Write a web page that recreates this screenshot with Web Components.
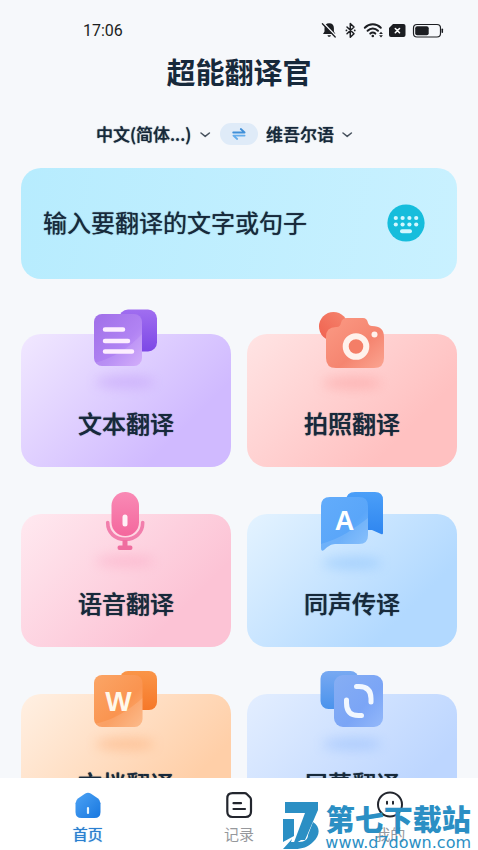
<!DOCTYPE html>
<html lang="zh-CN">
<head>
<meta charset="utf-8">
<meta name="viewport" content="width=device-width, initial-scale=1">
<title>超能翻译官</title>
<style>
  body {
    margin: 0;
    background: #f6f8fb;
    color: #17293b;
    font-family: "Noto Sans CJK SC", "Noto Sans", sans-serif;
  }
</style>
</head>
<body>
<translator-app></translator-app>

<script>
(function () {
  /** Register an element whose shadow root is a clone of the given markup. */
  function define(name, html, setup) {
    const template = document.createElement('template');
    template.innerHTML = html;
    customElements.define(name, class extends HTMLElement {
      constructor() {
        super();
        this.attachShadow({ mode: 'open' });
        this.shadowRoot.appendChild(template.content.cloneNode(true));
      }
      connectedCallback() {
        if (setup) setup(this, this.shadowRoot);
      }
    });
  }

  // Phone status bar: clock on the left, system icons on the right
  define('status-bar', `
    <style>
      :host {
        display: flex;
        align-items: center;
        justify-content: space-between;
        height: 38px;
        padding: 12px 34px 0 83px;
        font: 16px/20px Roboto, sans-serif;
        color: #1c1e22;
      }
      svg { display: block; }
    </style>
    <slot></slot>
    <svg width="124" height="18" viewBox="0 0 124 18" fill="none" stroke="#1c1e22" stroke-linecap="round" stroke-linejoin="round">
      <path d="M9.200 1.200c-3 0-4.700 2-4.700 4.700v3.600L3 12h12.400l-1.500-2.500V5.900c0-2.700-1.700-4.700-4.700-4.700zM7.500 13.200h3.400c-.3 2-3.100 2-3.400 0z" fill="#1c1e22" stroke="none"/>
      <path d="M3.600 1.400l12.600 13" stroke="#f6f8fb" stroke-width="1.600"/>
      <path d="M2.400 1.800l12.800 13.200" stroke-width="1.300"/>
      <path d="M27 5l7 6.800-3.700 3.500V1.500L34 5l-7 6.800" stroke-width="1.500"/>
      <path d="M26.400 8.400h.1M34.700 8.400h.1" stroke-width="1.700"/>
      <path d="M44.800 5.700c4.600-4.600 11.400-4.600 16 0M47.600 8.800c3-3 7.400-3 10.400 0M50.300 11.600c1.500-1.400 3.500-1.400 5 0" stroke-width="2"/>
      <circle cx="52.800" cy="14" r="1.300" fill="#1c1e22" stroke="none"/>
      <path d="M61 9.800l1.900 2.300h-3.800zM61 15.500l1.900-2.300h-3.800z" fill="#1c1e22" stroke="none"/>
      <path d="M73 2h10.500q2 0 2 2v9q0 2-2 2h-12.500q-2 0-2-2V6z" fill="#1c1e22" stroke="none"/>
      <path d="M75.300 6.500l4.200 4.200M79.500 6.500l-4.200 4.200" stroke="#fff" stroke-width="1.600"/>
      <rect x="93.500" y="2.500" width="27" height="12.500" rx="3.500" stroke-width="1.200"/>
      <rect x="95.200" y="4.200" width="13.500" height="9.100" rx="2" fill="#1c1e22" stroke="none"/>
      <path d="M122.300 7.200v3" stroke-width="1.500"/>
    </svg>
  `);

  // Drop-down for one side of the translation pair
  define('language-select', `
    <style>
      :host { display: inline-grid; align-items: center; }
      select, svg { grid-area: 1 / 1; }
      select {
        appearance: none;
        margin: 0;
        padding: 0 20px 0 0;
        border: 0;
        background: none;
        font: inherit;
        font-size: 17px;
        font-weight: 500;
        line-height: 24px;
        color: inherit;
        text-shadow: 0 0 1px currentColor;
      }
      svg { justify-self: end; pointer-events: none; }
    </style>
    <select><option></option></select>
    <svg width="12" height="12" viewBox="0 0 12 12" fill="none" stroke="#49535f" stroke-width="1.500" stroke-linecap="round" stroke-linejoin="round"><path d="M1 5l4.200 3.400L9.400 5"/></svg>
  `, (host, root) => {
    root.querySelector('option').textContent = host.getAttribute('value');
    root.querySelector('select').setAttribute('aria-label', host.getAttribute('label'));
  });

  define('language-bar', `
    <style>
      :host {
        display: grid;
        grid-template-columns: 1fr auto 1fr;
        align-items: center;
        gap: 8px;
      }
      ::slotted([slot="from"]) { justify-self: end; }
      ::slotted([slot="to"]) { justify-self: start; }
      button {
        display: grid;
        place-items: center;
        width: 38px;
        height: 22px;
        padding: 0;
        border: 0;
        border-radius: 11px;
        background: #dfebf8;
      }
    </style>
    <slot name="from"></slot>
    <button type="button" aria-label="交换语言">
      <svg width="14" height="14" viewBox="0 0 14 14" fill="none" stroke-width="1.800" stroke-linecap="round" stroke-linejoin="round">
        <path d="M1.200 5.500h11.400L8.800 2" stroke="#3f8fd8"/>
        <path d="M12.600 8.600H1.400l3.800 3.400" stroke="#64adec"/>
      </svg>
    </button>
    <slot name="to"></slot>
  `);

  define('phrase-box', `
    <style>
      :host {
        display: flex;
        align-items: center;
        gap: 16px;
        padding: 36px 32px 37px 22px;
        border-radius: 20px;
        background: linear-gradient(100deg, #b7ecfe, #c9f1ff);
      }
      input {
        flex: 1;
        box-sizing: border-box;
        min-width: 0;
        height: 38px;
        padding: 0 0 4px;
        border: 0;
        outline: 0;
        background: none;
        font: inherit;
        font-size: 24px;
        color: inherit;
      }
      input::placeholder { color: #17293b; opacity: 1; text-shadow: 0 0 1px currentColor; }
      button { padding: 0; border: 0; border-radius: 50%; background: none; }
      svg { display: block; }
    </style>
    <input type="text" aria-label="翻译内容" placeholder="输入要翻译的文字或句子">
    <button type="button" aria-label="键盘">
      <svg width="38" height="38" viewBox="0 0 38 38">
        <circle cx="19" cy="19" r="18.600" fill="#16bddc"/>
        <g fill="#d3f7ff">
          <circle cx="8.800" cy="14" r="2.100"/><circle cx="15.600" cy="14" r="2.100"/><circle cx="22.400" cy="14" r="2.100"/><circle cx="29.200" cy="14" r="2.100"/>
          <circle cx="8.800" cy="20.500" r="2.100"/><circle cx="15.600" cy="20.500" r="2.100"/><circle cx="22.400" cy="20.500" r="2.100"/><circle cx="29.200" cy="20.500" r="2.100"/>
          <rect x="13" y="25.200" width="12" height="4" rx="2"/>
        </g>
      </svg>
    </button>
  `);

  // Feature tile, its icon stands out above the top edge
  define('feature-card', `
    <style>
      :host { display: block; }
      button {
        display: flex;
        flex-direction: column;
        align-items: center;
        gap: 7px;
        width: 100%;
        padding: 0 0 28px;
        border: 0;
        border-radius: 20px;
        background: linear-gradient(135deg, var(--from), var(--to) 75%);
        font: inherit;
        font-size: 24px;
        font-weight: 500;
        line-height: 32px;
        color: inherit;
      }
      span { text-shadow: 0 0 1px currentColor; }
      ::slotted(svg) { display: block; margin-top: -34px; }
    </style>
    <button type="button">
      <slot name="icon"></slot>
      <span><slot></slot></span>
    </button>
  `);

  define('tab-item', `
    <style>
      :host { flex: 1; display: block; color: #96989c; }
      :host([active]) { color: #2a7fd0; }
      :host([active]) span { text-shadow: 0 0 1px currentColor; }
      a {
        display: flex;
        flex-direction: column;
        align-items: center;
        gap: 6px;
        font-size: 15px;
        line-height: 18px;
        color: inherit;
        text-decoration: none;
      }
      ::slotted(svg) { display: block; }
    </style>
    <a href="#"><slot name="icon"></slot><span><slot></slot></span></a>
  `);

  define('tab-bar', `
    <style>
      :host {
        display: block;
        background: #fff;
      }
      nav { display: flex; padding: 13px 12px 7px; }
    </style>
    <nav><slot></slot></nav>
  `);

  // Download site badge that lies over the lower right corner
  define('site-badge', `
    <style>
      :host {
        position: absolute;
        right: 7px;
        bottom: 0;
        display: flex;
        align-items: end;
        gap: 6px;
        color: #2b8fc4;
        pointer-events: none;
      }
      svg { display: block; }
      .text { display: grid; justify-items: center; }
      .name { font-size: 29px; font-weight: 900; line-height: 36px; }
      .url { font: 16px/14px "DejaVu Sans", sans-serif; }
    </style>
    <svg width="36" height="50" viewBox="0 0 36 50" fill="currentColor">
      <path d="M2 2h33v8L22 40h-4l-8 5 12-32H2z"/>
      <path d="M0 19h11v17L0 42zM0 49l9-10-1 3h8c6 0 9-3 9-7l5-13c8 5 7 14 0 20-5 5-11 7-18 7z"/>
    </svg>
    <div class="text">
      <span class="name">第七下载站</span>
      <span class="url">www.d7down.com</span>
    </div>
  `);

  define('translator-app', `
    <style>
      :host {
        position: relative;
        display: flex;
        flex-direction: column;
        height: 100vh;
        overflow: hidden;
      }
      main { flex: 1; min-height: 0; overflow: hidden; padding: 0 21px; }
      h1 { margin: 0; text-align: center; font-size: 29px; font-weight: 700; line-height: 42px; }
      language-bar { margin-top: 30px; }
      phrase-box { margin-top: 22px; }
      .features {
        display: grid;
        grid-template-columns: 1fr 1fr;
        gap: 47px 16px;
        margin-top: 55px;
      }
      .text { --from: #f1e8ff; --to: #d0baff; }
      .photo { --from: #ffe4e4; --to: #ffc1c1; }
      .voice { --from: #ffe9f0; --to: #fcc3d5; }
      .live { --from: #e4f3ff; --to: #b2d9ff; }
      .file { --from: #fff0e3; --to: #ffcfa8; }
      .screen { --from: #e3eeff; --to: #bdd6ff; }
    </style>
    <status-bar>17:06</status-bar>
    <main>
      <h1>超能翻译官</h1>
      <language-bar>
        <language-select slot="from" label="源语言" value="中文(简体...)"></language-select>
        <language-select slot="to" label="目标语言" value="维吾尔语"></language-select>
      </language-bar>
      <phrase-box></phrase-box>
      <div class="features">
        <feature-card class="text">
          <svg slot="icon" width="96" height="100" viewBox="-1 0 96 100">
            <defs>
              <linearGradient id="text-back" x2="0" y2="1"><stop stop-color="#a06ef0"/><stop offset="1" stop-color="#7d48e6"/></linearGradient>
              <linearGradient id="text-front" x2="1" y2="1"><stop stop-color="#a06fe8"/><stop offset=".6" stop-color="#b183f3"/><stop offset="1" stop-color="#cfa6fb"/></linearGradient>
              <filter id="soft" x="-50%" y="-150%" width="200%" height="400%"><feGaussianBlur stdDeviation="6"/></filter>
            </defs>
            <ellipse cx="46" cy="82" rx="30" ry="6" fill="#b78df5" opacity=".4" filter="url(#soft)"/>
            <rect x="40" y="9.500" width="38" height="42" rx="9" fill="url(#text-back)"/>
            <rect x="15" y="14" width="48" height="52" rx="8" fill="url(#text-front)"/>
            <path d="M15 63C35 58 50 48 63 34v24q0 8-8 8H23q-6 0-8-3z" fill="#fff" opacity=".1"/>
            <path d="M26 29.500h18M26 41h23M26 51.500h27" stroke="#fdeeff" stroke-width="4.500" stroke-linecap="round"/>
          </svg>文本翻译
        </feature-card>
        <feature-card class="photo">
          <svg slot="icon" width="96" height="100" viewBox="-1 0 96 100">
            <defs>
              <linearGradient id="photo-back" x1="1" x2="0" y2="1"><stop stop-color="#f5866f"/><stop offset="1" stop-color="#f0604e"/></linearGradient>
              <linearGradient id="photo-front" x2="1" y2="1"><stop stop-color="#fb9a84"/><stop offset=".6" stop-color="#f58570"/><stop offset="1" stop-color="#fba592"/></linearGradient>
            </defs>
            <ellipse cx="47" cy="83" rx="30" ry="6" fill="#fb8f8f" opacity=".4" filter="url(#soft)"/>
            <circle cx="28.500" cy="26.500" r="14.500" fill="url(#photo-back)"/>
            <path d="M31 27h1q3 0 4-4 1-5 6-5h16q4 0 5 5 1 3 4 3 12 0 12 11v21q0 10-10 10H31q-10 0-10-10V37q0-10 10-10z" fill="url(#photo-front)"/>
            <circle cx="51" cy="46.500" r="8" fill="#f47e67"/>
            <circle cx="51" cy="46.500" r="10.300" fill="none" stroke="#fff2ec" stroke-width="6"/>
            <circle cx="69.500" cy="34.500" r="3" fill="#fff2ec"/>
          </svg>拍照翻译
        </feature-card>
        <feature-card class="voice">
          <svg slot="icon" width="96" height="100" viewBox="-1 0 96 100">
            <defs>
              <linearGradient id="voice-front" x2="0" y2="1"><stop stop-color="#f98ab5"/><stop offset="1" stop-color="#f4679d"/></linearGradient>
            </defs>
            <ellipse cx="46" cy="81" rx="30" ry="6" fill="#fa8db2" opacity=".3" filter="url(#soft)"/>
            <rect x="32.500" y="12" width="27.500" height="44" rx="13.700" fill="url(#voice-front)"/>
            <rect x="43.500" y="34.500" width="5" height="12" rx="2.500" fill="#fff0f6"/>
            <path d="M28.700 42.500c0 10.500 7.500 16.800 17.500 16.800s17.500-6.300 17.500-16.800" fill="none" stroke="#f27eac" stroke-width="3.600" stroke-linecap="round"/>
            <path d="M43.500 60h5v5.500h3q2 0 2 2.200t-2 2.300h-11q-2 0-2-2.300t2-2.200h3z" fill="#ef6d9f"/>
          </svg>语音翻译
        </feature-card>
        <feature-card class="live">
          <svg slot="icon" width="96" height="100" viewBox="-1 0 96 100">
            <defs>
              <linearGradient id="live-back" x2="0" y2="1"><stop stop-color="#4b9ff8"/><stop offset="1" stop-color="#2f86f0"/></linearGradient>
              <linearGradient id="live-front" x2="1" y2="1"><stop stop-color="#62acfb"/><stop offset=".6" stop-color="#5aa6f9"/><stop offset="1" stop-color="#7dbbfc"/></linearGradient>
            </defs>
            <ellipse cx="47" cy="83" rx="30" ry="6" fill="#6cb0fb" opacity=".35" filter="url(#soft)"/>
            <path d="M50 12h20q8 0 8 8v33q0 2-2 1l-9-4H50q-9 0-9-9V21q0-9 9-9z" fill="url(#live-back)"/>
            <path d="M25 17h29q9 0 9 9v29q0 9-9 9H30c-4 0-8 3-11 6q-3 2-3-2V26q0-9 9-9z" fill="url(#live-front)"/>
            <path d="M16 64C35 59 50 48 63 38v17q0 9-9 9H30c-4 0-8 3-11 6q-3 2-3-2z" fill="#fff" opacity=".12"/>
            <text x="39.500" y="50" text-anchor="middle" font-family="Liberation Sans, sans-serif" font-size="27" font-weight="700" fill="#fff">A</text>
          </svg>同声传译
        </feature-card>
        <feature-card class="file">
          <svg slot="icon" width="96" height="100" viewBox="-1 0 96 100">
            <defs>
              <linearGradient id="file-back" x2="0" y2="1"><stop stop-color="#fa9548"/><stop offset="1" stop-color="#f67829"/></linearGradient>
              <linearGradient id="file-front" x2="1" y2="1"><stop stop-color="#fba566"/><stop offset=".6" stop-color="#fa9450"/><stop offset="1" stop-color="#fcb27d"/></linearGradient>
            </defs>
            <ellipse cx="46" cy="84" rx="30" ry="6" fill="#fb9f62" opacity=".4" filter="url(#soft)"/>
            <rect x="41" y="11" width="37" height="39" rx="8" fill="url(#file-back)"/>
            <rect x="15" y="15" width="48.500" height="52" rx="8" fill="url(#file-front)"/>
            <path d="M15 64C35 60 50 50 63.500 38v21q0 8-8 8H23q-6 0-8-3z" fill="#fff" opacity=".12"/>
            <text x="39.500" y="51" text-anchor="middle" font-family="Liberation Sans, sans-serif" font-size="28" font-weight="700" fill="#fff8ea">W</text>
          </svg>文档翻译
        </feature-card>
        <feature-card class="screen">
          <svg slot="icon" width="96" height="100" viewBox="-1 0 96 100">
            <defs>
              <linearGradient id="screen-back" x2="0" y2="1"><stop stop-color="#78a9f2"/><stop offset="1" stop-color="#4a93ec"/></linearGradient>
              <linearGradient id="screen-front" x2="1" y2="1"><stop stop-color="#86aef3"/><stop offset=".6" stop-color="#7ba5f6"/><stop offset="1" stop-color="#94b9fa"/></linearGradient>
            </defs>
            <ellipse cx="47" cy="84" rx="30" ry="6" fill="#81b0fb" opacity=".4" filter="url(#soft)"/>
            <rect x="15.500" y="11" width="38" height="38" rx="8" fill="url(#screen-back)"/>
            <rect x="29" y="15" width="49" height="52" rx="9" fill="url(#screen-front)"/>
            <path d="M51.500 26.500H54q12 0 12 12V42M41.500 40v3q0 12.500 12 12.500h3" fill="none" stroke="#f1f7ff" stroke-width="5" stroke-linecap="round"/>
          </svg>屏幕翻译
        </feature-card>
      </div>
    </main>
    <tab-bar>
      <tab-item active>
        <svg slot="icon" width="28" height="28" viewBox="0 0 28 28">
          <defs><linearGradient id="home" x2="1" y2="1"><stop stop-color="#4da3f5"/><stop offset="1" stop-color="#1877df"/></linearGradient></defs>
          <path d="M11.300 2.500q2.700-1.700 5.400 0l7 4.700q2.800 1.900 2.800 5V21q0 6-6 6h-13q-6 0-6-6v-8.800q0-3.100 2.800-5z" fill="url(#home)"/>
          <path d="M14 17v5" stroke="#e6f6ff" stroke-width="2.200" stroke-linecap="round"/>
        </svg>首页
      </tab-item>
      <tab-item>
        <svg slot="icon" width="28" height="28" viewBox="0 0 28 28" fill="none" stroke="#23262e" stroke-width="2.200" stroke-linecap="round" stroke-linejoin="round">
          <path d="M7.500 2.200h12q1.500 0 2.500 1L25 6.300q1 1 1 2.500V20.500q0 5.500-5.500 5.500h-13Q2.300 26 2.300 20.500v-13q0-5.300 5.200-5.300z"/>
          <path d="M8.500 12.200h7.500M8.500 18h11.500"/>
        </svg>记录
      </tab-item>
      <tab-item>
        <svg slot="icon" width="28" height="28" viewBox="0 0 28 28" fill="none" stroke="#23262e" stroke-width="2" stroke-linecap="round">
          <circle cx="14" cy="13.500" r="12"/>
          <path d="M11 10.800v2M17 10.800v2"/>
        </svg>我的
      </tab-item>
    </tab-bar>
    <site-badge></site-badge>
  `);
})();
</script>
</body>
</html>
